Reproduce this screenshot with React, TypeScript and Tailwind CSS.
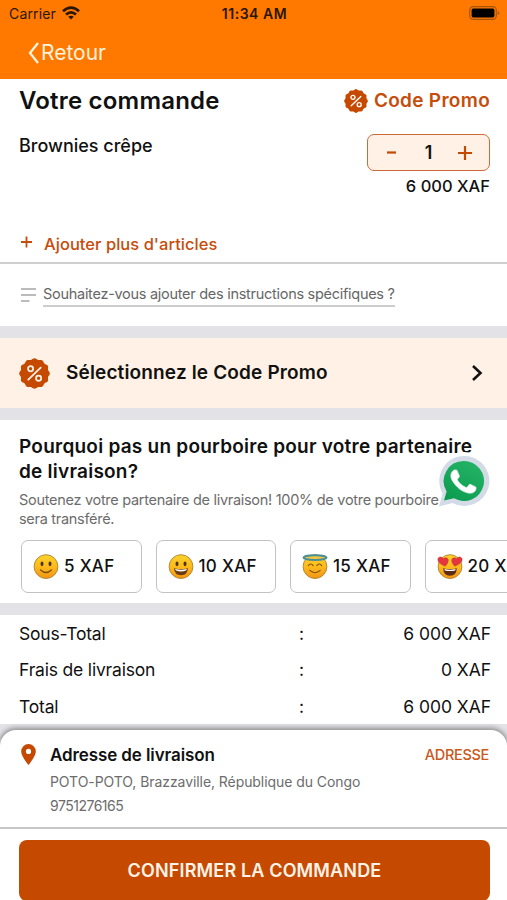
import React from "react";

const SCALLOP = Array.from({ length: 96 }, (_, i) => {
  const a = (i / 96) * Math.PI * 2;
  const r = 14.2 + 0.65 * Math.cos(a * 12);
  return `${(15 + r * Math.sin(a)).toFixed(2)},${(15 - r * Math.cos(a)).toFixed(2)}`;
}).join(" ");

function PromoBadge({ className, hole }: { className: string; hole: string }) {
  return (
    <svg viewBox="0 0 30 30" className={className}>
      <polygon points={SCALLOP} fill="#c64900" />
      <g fill="none" stroke={hole} strokeWidth="1.7" strokeLinecap="round">
        <path d="M9 21 21 9.3" />
        <circle cx="11.2" cy="10.4" r="2.5" />
        <circle cx="19" cy="19.6" r="2.5" />
      </g>
    </svg>
  );
}

type Mood = "smile" | "grin" | "halo" | "hearts";

function Emoji({ mood }: { mood: Mood }) {
  return (
    <svg viewBox="0 0 26 26" className="h-[26px] w-[26px] shrink-0 overflow-visible">
      <defs>
        <linearGradient id={`face-${mood}`} x1="0" y1="0" x2="0" y2="1">
          <stop offset="0" stopColor="#fbd32c" />
          <stop offset="0.5" stopColor="#fdba1c" />
          <stop offset="1" stopColor="#f39413" />
        </linearGradient>
      </defs>
      <circle cx="13" cy="12.6" r="11.9" fill={`url(#face-${mood})`} stroke="#a9812f" strokeWidth="0.9" />
      {(mood === "smile" || mood === "grin") && (
        <g fill="#50350c">
          <ellipse cx="9" cy="9.8" rx="1.5" ry="2.4" />
          <ellipse cx="17" cy="9.8" rx="1.5" ry="2.4" />
        </g>
      )}
      {mood === "smile" && (
        <path d="M7.6 16Q13 21 18.4 16" fill="none" stroke="#7b4d0a" strokeWidth="1.3" strokeLinecap="round" />
      )}
      {mood === "grin" && (
        <>
          <path d="M6 14.2Q13 16 20 14.2Q19.4 21.2 13 21.2T6 14.2Z" fill="#6b3a12" />
          <path d="M7 15Q13 16.4 19 15Q18.6 17.4 13 17.4T7 15Z" fill="#fff" />
        </>
      )}
      {mood === "halo" && (
        <>
          <ellipse cx="13" cy="3.600" rx="11.5" ry="2.4" fill="#f5c843" stroke="#4a8e96" strokeWidth="2" />
          <g fill="none" stroke="#7b4d0a" strokeWidth="1.1" strokeLinecap="round">
            <path d="M6.3 11.6Q8.8 8.400 11.2 11.6" />
            <path d="M14.8 11.6Q17.2 8.400 19.7 11.6" />
            <path d="M7.8 16.4Q13 21 18.2 16.4" />
          </g>
        </>
      )}
      {mood === "hearts" && (
        <>
          <path d="M6.2 14.2Q13 16 19.8 14.2Q19.4 21.8 13 21.8T6.2 14.2Z" fill="#5c2c16" />
          <path d="M7.4 15Q13 16.4 18.6 15L18.2 16.6Q13 17.6 7.8 16.6Z" fill="#fff" />
          <g fill="#e5353f" stroke="#c0252f" strokeWidth="0.4">
            <path d="M8.2 12.2C3.5 10.5 0 7.6 1 4.6C2 2.2 5 2.4 6.3 4.8C8.3 2.8 11.4 3.8 11.3 6.4C11.2 8.7 9.7 10.5 8.2 12.2Z" />
            <path d="M17.8 12.2C22.5 10.5 26 7.6 25 4.6C24 2.2 21 2.4 19.7 4.8C17.7 2.8 14.6 3.8 14.7 6.4C14.8 8.7 16.3 10.5 17.8 12.2Z" />
          </g>
        </>
      )}
    </svg>
  );
}

function WhatsApp() {
  return (
    <svg viewBox="0 0 60 60" className="absolute left-[434px] top-[451px] h-[60px] w-[60px]">
      <defs>
        <linearGradient id="wa" x1="0.8" y1="0" x2="0.2" y2="1">
          <stop offset="0" stopColor="#25b466" />
          <stop offset="1" stopColor="#0c9c50" />
        </linearGradient>
      </defs>
      <circle cx="30" cy="30" r="29" fill="#fff" />
      <path d="M30.2 5A25 25 0 1 1 18.5 52L5 55.5 8.6 42.5A25 25 0 0 1 30.2 5Z" fill="#d3dbe7" />
      <path d="M29.8 10A20 20 0 1 1 20 47.3L10 49.6 12.6 40.4A20 20 0 0 1 29.8 10Z" fill="url(#wa)" />
      <g transform="translate(4.4 5.600) scale(2.08)">
        <path
          fill="#fff"
          stroke="#fff"
          strokeWidth="0.3"
          d="M17.472 14.382c-.297-.149-1.758-.867-2.03-.967-.273-.099-.471-.148-.67.15-.197.297-.767.966-.94 1.164-.173.199-.347.223-.644.075-.297-.15-1.255-.463-2.39-1.475-.883-.788-1.48-1.761-1.653-2.059-.173-.297-.018-.458.13-.606.134-.133.298-.347.446-.52.149-.174.198-.298.298-.497.099-.198.05-.371-.025-.52-.075-.149-.669-1.612-.916-2.207-.242-.579-.487-.5-.669-.51-.173-.008-.371-.01-.57-.01-.198 0-.52.074-.792.372-.272.297-1.04 1.016-1.04 2.479 0 1.462 1.065 2.875 1.213 3.074.149.198 2.096 3.2 5.077 4.487.709.306 1.262.489 1.694.625.712.227 1.36.195 1.871.118.571-.085 1.758-.719 2.006-1.413.248-.694.248-1.289.173-1.413-.074-.124-.272-.198-.57-.347"
        />
      </g>
    </svg>
  );
}

const TIPS: { mood: Mood; label: string }[] = [
  { mood: "smile", label: "5 XAF" },
  { mood: "grin", label: "10 XAF" },
  { mood: "halo", label: "15 XAF" },
  { mood: "hearts", label: "20 XAF" },
];

const TOTALS = [
  ["Sous-Total", "6 000 XAF"],
  ["Frais de livraison", "0 XAF"],
  ["Total", "6 000 XAF"],
];

export default function App() {
  return (
    <div className="relative flex h-[900px] w-[507px] flex-col overflow-hidden bg-white font-['Inter','Liberation_Sans',sans-serif] text-[#111]">
      <header className="h-[79px] shrink-0 bg-[#ff7900]">
        <div className="grid h-[27px] grid-cols-3 items-center pl-[9px] pr-[7px] text-[14px] leading-none text-[#2b1600]">
          <div className="flex items-center gap-[6px]">
            <span className="tracking-[0.15px]">Carrier</span>
            <svg viewBox="0 0 18 14" className="mb-px h-[14px] w-[18px]" fill="none" stroke="#2b1600" strokeWidth="2.7">
              <path d="M1 5.2Q9-2 17 5.2" />
              <path d="M4 8.6Q9 4 14 8.6" />
              <path d="M9 13.5 6.2 10.7Q9 8.6 11.8 10.7Z" fill="#2b1600" stroke="none" />
            </svg>
          </div>
          <span className="whitespace-nowrap text-center font-semibold tracking-[0.55px]">11:34 AM</span>
          <svg viewBox="0 0 31 14" className="mb-px h-[14px] w-[31px] justify-self-end">
            <rect x="0.7" y="0.7" width="26.6" height="12.6" rx="3.6" fill="none" stroke="#a65408" strokeWidth="1.2" />
            <rect x="2.6" y="2.6" width="22.8" height="8.8" rx="1.6" fill="#000" />
            <path d="M28.8 5v4q1.6-.8 1.6-2t-1.6-2Z" fill="#a65408" />
          </svg>
        </div>
        <div className="flex h-[51px] items-center pl-[28px] text-[21px] text-[#fff3dc]">
          <svg viewBox="0 0 12 24" className="mr-px h-6 w-3" fill="none" stroke="#fff3dc" strokeWidth="2.3">
            <path d="M10 2 2 12 10 22" />
          </svg>
          <span>Retour</span>
        </div>
      </header>

      <section className="flex h-[185px] shrink-0 flex-col border-b-2 border-[#cfcfcf] pl-[19px] pr-[17px]">
        <div className="flex h-[44px] items-center justify-between">
          <h1 className="text-[24px] font-semibold tracking-[0.2px]">Votre commande</h1>
          <div className="flex items-center gap-[6px] text-[19px] font-semibold text-[#c64d0b]">
            <PromoBadge className="h-6 w-6" hole="#fff" />
            <span className="tracking-[0.3px]">Code Promo</span>
          </div>
        </div>
        <div className="flex h-[98px] justify-between pt-[11px]">
          <span className="text-[18px] font-medium leading-6">Brownies crêpe</span>
          <div className="flex flex-col items-end">
            <div className="flex h-[37px] w-[123px] items-center justify-between rounded-[7px] border border-[#cd6a38] bg-[#fff1e6] pl-[17px] pr-[16px] text-[#c64900]">
              <svg viewBox="0 0 12 16" className="h-4 w-3" stroke="currentColor" strokeWidth="2.2">
                <path d="M2 7.5h9" />
              </svg>
              <span className="pl-[3px] text-[18px] font-semibold text-[#111]">1</span>
              <svg viewBox="0 0 16 16" className="h-4 w-4" stroke="currentColor" strokeWidth="2.2">
                <path d="M1 8h14M8 1v14" />
              </svg>
            </div>
            <span className="mt-[4px] text-[16.5px] font-medium leading-[22px]">6 000 XAF</span>
          </div>
        </div>
        <div className="flex h-[41px] items-center pt-[4px] text-[#c64d0b]">
          <svg viewBox="0 0 14 14" className="mb-[4px] h-[14px] w-[14px]" stroke="currentColor" strokeWidth="1.8">
            <path d="M2 7h11M7.500 1.500v11" />
          </svg>
          <span className="pl-[11px] text-[16.5px] font-medium leading-6 tracking-[0.03px]">Ajouter plus d'articles</span>
        </div>
      </section>

      <section className="flex h-[62px] shrink-0 items-center pl-[20px]">
        <svg viewBox="0 0 16 16" className="h-4 w-4" stroke="#a5a5a5" strokeWidth="1.5">
          <path d="M1 2h15M1 8h15M1 14h8.500" />
        </svg>
        <span className="ml-[7px] border-b-2 border-[#cdcdcd] text-[14.5px] leading-[22px] tracking-[-0.28px] text-[#666]">
          Souhaitez-vous ajouter des instructions spécifiques ?
        </span>
      </section>

      <section className="flex h-[94px] shrink-0 items-center border-y-12 border-[#e3e3e7] bg-[#fff1e6] pl-[19px] pr-[24px]">
        <PromoBadge className="h-[31px] w-[31px]" hole="#fff1e6" />
        <span className="flex-1 pl-[16px] text-[19px] font-semibold tracking-[0.15px]">Sélectionnez le Code Promo</span>
        <svg viewBox="0 0 12 18" className="h-[18px] w-3" fill="none" stroke="#111" strokeWidth="2.6">
          <path d="M2 2 9.500 9 2 16" />
        </svg>
      </section>

      <section className="h-[195px] shrink-0 border-b-12 border-[#e3e3e7] pt-[14px]">
        <h2 className="whitespace-nowrap pl-[19px] text-[19px] font-semibold leading-[25px] tracking-[0.24px]">
          Pourquoi pas un pourboire pour votre partenaire
          <br />
          de livraison?
        </h2>
        <p className="whitespace-nowrap pl-[19px] pt-[6px] text-[14.5px] leading-[19px] tracking-[-0.29px] text-[#6c6c6c]">
          Soutenez votre partenaire de livraison! 100% de votre pourboire
          <br />
          sera transféré.
        </p>
        <div className="flex gap-[14px] pl-[21px] pt-[12px]">
          {TIPS.map((tip) => (
            <div
              key={tip.label}
              className="flex h-[53px] w-[120.5px] shrink-0 items-center gap-[5px] rounded-[7px] border-[1.5px] border-[#c2c2c2] pl-[11px]"
            >
              <Emoji mood={tip.mood} />
              <span className="whitespace-nowrap text-[17px] font-medium tracking-[0.3px]">{tip.label}</span>
            </div>
          ))}
        </div>
      </section>

      <section className="h-[109px] shrink-0 pl-[19px] pr-[16px]">
        {TOTALS.map(([label, value]) => (
          <div key={label} className="grid h-[36.5px] grid-cols-[280px_1fr_auto] items-center pt-px text-[17.5px]">
            <span className="tracking-[-0.18px]">{label}</span>
            <span>:</span>
            <span className="tracking-[-0.05px]">{value}</span>
          </div>
        ))}
      </section>

      <div className="flex flex-1 flex-col bg-[#e3e3e7] pt-[6px]">
        <footer className="flex-1 rounded-t-[16px] bg-white shadow-[0_-1px_5px_1px_rgba(0,0,0,0.38)]">
          <div className="flex h-[99px] border-b-2 border-[#c6c6c6] pl-[21px] pr-[18px] pt-[13px]">
            <svg viewBox="0 0 15 21" className="mt-[1px] h-[21px] w-[15px]">
              <path d="M7.500 0A7.300 7.300 0 0 0 .2 7.300C.2 12.700 7.500 21 7.500 21S14.800 12.700 14.800 7.300A7.300 7.300 0 0 0 7.500 0Z" fill="#c64900" />
              <circle cx="7.500" cy="7.400" r="2.600" fill="#fff" />
            </svg>
            <div className="flex-1 pl-[14px] text-[14px] leading-6 text-[#6c6c6c]">
              <p className="text-[17px] font-semibold tracking-[-0.1px] text-[#111]">Adresse de livraison</p>
              <p className="mt-[3px] tracking-[-0.07px]">POTO-POTO, Brazzaville, République du Congo</p>
              <p className="tracking-[-0.5px]">9751276165</p>
            </div>
            <span className="text-[14.5px] font-medium leading-6 tracking-[-0.3px] text-[#c9591c]">ADRESSE</span>
          </div>
          <div className="flex flex-col pl-[19px] pr-[17px] pt-[11px]">
            <button className="h-[61px] rounded-[8px] bg-[#c64900] text-[18px] font-semibold tracking-[0.15px] text-[#fff3e8]">CONFIRMER LA COMMANDE</button>
          </div>
        </footer>
      </div>

      <WhatsApp />
    </div>
  );
}
